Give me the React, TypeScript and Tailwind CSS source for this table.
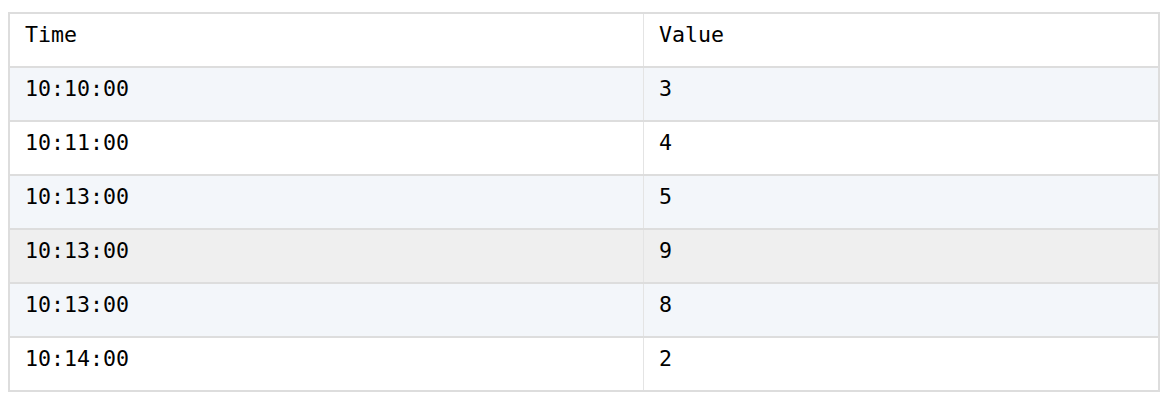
const rows = [
  { time: '10:10:00', value: '3', bg: 'bg-[#f3f6fa]' },
  { time: '10:11:00', value: '4', bg: 'bg-white' },
  { time: '10:13:00', value: '5', bg: 'bg-[#f3f6fa]' },
  { time: '10:13:00', value: '9', bg: 'bg-[#efefef]' },
  { time: '10:13:00', value: '8', bg: 'bg-[#f3f6fa]' },
  { time: '10:14:00', value: '2', bg: 'bg-white' },
]

function Row({ a, b, bg, last }: { a: string; b: string; bg: string; last?: boolean }) {
  return (
    <div className={`flex h-[52px] ${bg} ${last ? '' : 'border-b-2 border-[#dddddd]'} box-content`}>
      <div className="w-[634px] border-r border-[#e4e4e4] px-[15px] pt-2 leading-[26px]">{a}</div>
      <div className="flex-1 px-[15px] pt-2 leading-[26px]">{b}</div>
    </div>
  )
}

export default function App() {
  return (
    <div className="bg-white min-h-screen pl-2 pt-3">
      <div
        className="w-[1152px] border-2 border-[#dddddd] text-[21.6px] text-black"
        style={{ fontFamily: '"DejaVu Sans Mono", monospace' }}>
        <Row a="Time" b="Value" bg="bg-white" />
        {rows.map((r, i) => (
          <Row key={i} a={r.time} b={r.value} bg={r.bg} last={i === rows.length - 1} />
        ))}
      </div>
    </div>
  )
}
